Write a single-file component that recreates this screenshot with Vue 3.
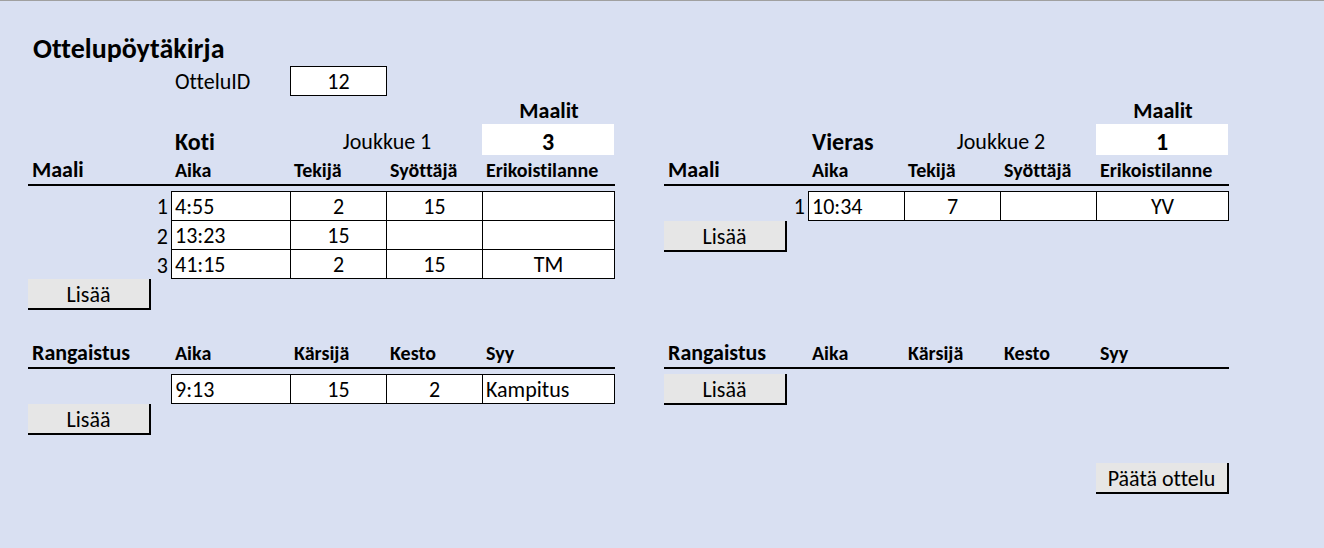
<script setup>
import { ref } from 'vue'

const matchId = ref('12')

const share = (cols) => {
  const total = cols.reduce((a, b) => a + b, 0)
  return cols.map((c) => (c * 100) / total + '%')
}

const teams = [
  {
    key: 'home',
    side: 'Koti',
    name: 'Joukkue 1',
    score: 3,
    cols: share([143, 120, 96, 96, 132]),
    goals: [
      ['4:55', '2', '15', ''],
      ['13:23', '15', '', ''],
      ['41:15', '2', '15', 'TM'],
    ],
    penalties: [['9:13', '15', '2', 'Kampitus']],
  },
  {
    key: 'away',
    side: 'Vieras',
    name: 'Joukkue 2',
    score: 1,
    cols: share([144, 97, 96, 96, 132]),
    goals: [['10:34', '7', '', 'YV']],
    penalties: [],
  },
]

const goalHeads = ['Aika', 'Tekijä', 'Syöttäjä', 'Erikoistilanne']
const penaltyHeads = ['Aika', 'Kärsijä', 'Kesto', 'Syy']
</script>

<template>
  <main class="sheet">
    <h1>Ottelupöytäkirja</h1>

    <div class="pair">
      <div class="match" :style="{ gridTemplateColumns: teams[0].cols.join(' ') }">
        <label for="match-id">OtteluID</label>
        <input id="match-id" v-model="matchId" type="text" />
      </div>
    </div>

    <div class="pair">
      <header
        v-for="t in teams"
        :key="t.key"
        class="team"
        :style="{ gridTemplateColumns: t.cols.join(' ') }"
      >
        <span class="caption">Maalit</span>
        <h2>{{ t.side }}</h2>
        <span class="name">{{ t.name }}</span>
        <output class="score">{{ t.score }}</output>
      </header>
    </div>

    <div class="pair">
      <section v-for="t in teams" :key="t.key">
        <table>
          <colgroup>
            <col v-for="(c, i) in t.cols" :key="i" :style="{ width: c }" />
          </colgroup>
          <thead>
            <tr>
              <th class="kind" scope="col">Maali</th>
              <th v-for="h in goalHeads" :key="h" scope="col">{{ h }}</th>
            </tr>
          </thead>
          <tbody>
            <tr class="spacer"><td colspan="5"></td></tr>
            <tr v-for="(row, r) in t.goals" :key="r" class="entry">
              <th scope="row">{{ r + 1 }}</th>
              <td v-for="(v, i) in row" :key="i">{{ v }}</td>
            </tr>
          </tbody>
        </table>
        <button type="button" class="add">Lisää</button>
      </section>
    </div>

    <div class="pair penalties">
      <section v-for="t in teams" :key="t.key">
        <table>
          <colgroup>
            <col v-for="(c, i) in t.cols" :key="i" :style="{ width: c }" />
          </colgroup>
          <thead>
            <tr>
              <th class="kind" scope="col">Rangaistus</th>
              <th v-for="h in penaltyHeads" :key="h" scope="col">{{ h }}</th>
            </tr>
          </thead>
          <tbody>
            <tr class="spacer"><td colspan="5"></td></tr>
            <tr v-for="(row, r) in t.penalties" :key="r" class="entry reason">
              <th scope="row"></th>
              <td v-for="(v, i) in row" :key="i">{{ v }}</td>
            </tr>
          </tbody>
        </table>
        <button type="button" class="add">Lisää</button>
      </section>
    </div>

    <footer>
      <button type="button" class="finish">Päätä ottelu</button>
    </footer>
  </main>
</template>

<style>
body {
  background: #d9e0f2;
}
</style>

<style scoped>
.sheet {
  box-sizing: border-box;
  min-height: 100vh;
  padding: 32px 95px 28px 28px;
  border-top: 1px solid #a0a0a0;
  background: #d9e0f2;
  color: #000;
  font-family: Calibri, Carlito, Lato, sans-serif;
  font-size: 22px;
  font-variant-ligatures: none;
  line-height: 28px;
}

h1 {
  margin: 0;
  padding: 0 0 2px 5px;
  font-size: 28px;
  line-height: 31px;
}

.pair {
  display: grid;
  grid-template-columns: 587fr 565fr;
  column-gap: 49px;
}

.penalties {
  margin-top: 28px;
}

.match,
.team {
  display: grid;
}

.match label {
  grid-column: 2;
  padding-left: 4px;
  line-height: 32px;
}

.match input {
  box-sizing: border-box;
  grid-column: 3;
  width: calc(100% + 1px);
  height: 30px;
  margin: 0 0 0 -1px;
  padding: 0;
  border: 1px solid #000;
  border-radius: 0;
  background: #fff;
  color: inherit;
  font: inherit;
  text-align: center;
}

.team {
  grid-template-rows: 26px 31px;
}

.caption {
  grid-column: 5;
  font-weight: 700;
  line-height: 26px;
  text-align: center;
}

h2 {
  grid-column: 2;
  margin: 0;
  padding-left: 4px;
  font-size: 24px;
  line-height: 35px;
}

.name {
  grid-column: 3 / 5;
  line-height: 36px;
  text-align: center;
}

.score {
  grid-column: 5;
  margin: 0 1px 0 -1px;
  background: #fff;
  font-size: 24px;
  font-weight: 700;
  line-height: 35px;
  text-align: center;
}

table {
  width: 100%;
  border-collapse: separate;
  border-spacing: 0;
  table-layout: fixed;
}

th,
td {
  box-sizing: border-box;
  padding: 0;
}

thead th {
  height: 31px;
  padding: 2px 0 0 3px;
  border-bottom: 2px solid #000;
  font-size: 20px;
  line-height: 26px;
  text-align: left;
  vertical-align: baseline;
  white-space: nowrap;
}

thead .kind {
  padding-left: 4px;
  font-size: 22px;
}

thead .kind + th {
  padding-left: 4px;
}

.spacer td {
  height: 5px;
}

.entry th,
.entry td {
  padding-top: 2px;
  line-height: 26px;
}

.entry th {
  padding-right: 3px;
  font-weight: 400;
  text-align: right;
}

.entry td {
  height: 29px;
  border-right: 1px solid #000;
  border-bottom: 1px solid #000;
  background: #fff;
  text-align: center;
}

.spacer + .entry td {
  height: 30px;
  border-top: 1px solid #000;
}

.entry td:nth-child(2) {
  padding-left: 3px;
  border-left: 1px solid #000;
  text-align: left;
}

.reason td:last-child {
  padding-left: 3px;
  text-align: left;
}

button {
  display: block;
  box-sizing: border-box;
  height: 31px;
  padding: 2px 0 0;
  border: solid #000;
  border-width: 0 2px 2px 0;
  border-radius: 0;
  background: #e6e6e6;
  color: inherit;
  font: inherit;
  font-variant-ligatures: none;
}

.add {
  width: 123px;
}

footer {
  display: flex;
  justify-content: flex-end;
  margin-top: 28px;
}

.finish {
  width: 133px;
}
</style>
